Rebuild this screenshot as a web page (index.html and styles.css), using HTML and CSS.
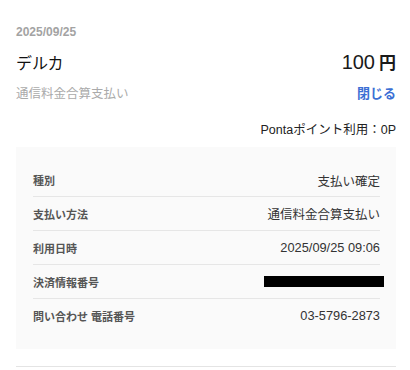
FILE: index.html
```html
<!DOCTYPE html>
<html lang="ja">
<head>
<meta charset="utf-8">
<link rel="stylesheet" href="styles.css">
</head>
<body>
<div class="page">
  <div class="date">2025/09/25</div>
  <div class="row main">
    <div class="shop">デルカ</div>
    <div class="amount">100<span class="yen">円</span></div>
  </div>
  <div class="row sub">
    <div class="method">通信料金合算支払い</div>
    <div class="close">閉じる</div>
  </div>
  <div class="points">Pontaポイント利用：0P</div>
  <div class="details">
    <div class="item"><span class="label">種別</span><span class="value">支払い確定</span></div>
    <div class="item"><span class="label">支払い方法</span><span class="value">通信料金合算支払い</span></div>
    <div class="item"><span class="label">利用日時</span><span class="value num">2025/09/25 09:06</span></div>
    <div class="item"><span class="label">決済情報番号</span><span class="value"><span class="redact"></span></span></div>
    <div class="item"><span class="label">問い合わせ 電話番号</span><span class="value num">03-5796-2873</span></div>
  </div>
  <div class="bottom-line"></div>
</div>
</body>
</html>
```
FILE: styles.css
```css
* { box-sizing: border-box; }
html, body { margin: 0; padding: 0; background: #ffffff; }
body {
  font-family: "Liberation Sans", "Noto Sans CJK JP", sans-serif;
  color: #222;
  width: 410px;
}
.page {
  padding: 24px 14px 0 16px;
}
.date {
  font-size: 12px;
  font-weight: bold;
  line-height: 16px;
  color: #a3a3a3;
}
.row {
  display: flex;
  justify-content: space-between;
  align-items: baseline;
}
.main {
  margin-top: 8px;
  line-height: 28px;
}
.shop {
  font-size: 16px;
  color: #111;
}
.amount {
  font-size: 20px;
  color: #1a1a1a;
}
.yen {
  font-size: 17px;
  font-weight: bold;
  margin-left: 4px;
}
.sub {
  margin-top: 6px;
  line-height: 20px;
}
.method {
  font-size: 12.5px;
  color: #aaaaaa;
}
.close {
  font-size: 13px;
  font-weight: bold;
  color: #3b6fd4;
}
.points {
  margin-top: 17px;
  font-size: 12.5px;
  line-height: 18px;
  text-align: right;
  color: #222;
}
.details {
  margin-top: 8px;
  background: #fafafa;
  padding: 17px 16px 17px 17px;
}
.item {
  display: flex;
  justify-content: space-between;
  align-items: center;
  height: 34px;
  border-bottom: 1px solid #e6e6e6;
}
.item:first-child { height: 33px; }
.item:last-child { border-bottom: none; height: 33px; }
.label {
  font-size: 11px;
  font-weight: 600;
  color: #555;
}
.value {
  font-size: 12.5px;
  color: #333;
  display: flex;
  align-items: center;
}
.value.num {
  font-size: 12.8px;
}
.redact {
  display: block;
  width: 120px;
  height: 11px;
  background: #000;
  margin-right: -4px;
}
.bottom-line {
  margin-top: 17px;
  height: 1px;
  background: #e4e4e4;
}
```
